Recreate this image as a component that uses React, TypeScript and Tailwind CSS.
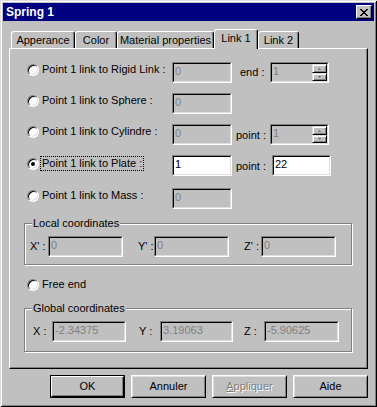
import React from 'react';

const font = "font-['Liberation_Sans',Arial,sans-serif]";

function Pixels({ rows, color }: { rows: string[]; color: string }) {
  return (
    <svg width={rows[0].length} height={rows.length} shapeRendering="crispEdges" className="block">
      {rows.flatMap((r, y) =>
        r.split('').map((c, x) =>
          c === 'X' ? <rect key={`${x}-${y}`} x={x} y={y} width={1} height={1} fill={color} /> : null
        )
      )}
    </svg>
  );
}

const closeGlyph = ['XX....XX', '.XX..XX.', '..XXXX..', '...XX...', '..XXXX..', '.XX..XX.', 'XX....XX'];

function Radio({ checked = false }: { checked?: boolean }) {
  return (
    <span className="relative block h-[12px] w-[12px] shrink-0 rounded-full border border-t-[#808080] border-l-[#808080] border-r-white border-b-white bg-white shadow-[inset_1px_1px_0_#000,inset_-1px_-1px_0_#dfdfdf]">
      {checked && <span className="absolute left-[3px] top-[3px] h-[4px] w-[4px] rounded-full bg-black" />}
    </span>
  );
}

function SpinBtn({ up = false }: { up?: boolean }) {
  return (
    <div
      className={`flex items-center justify-center border border-t-[#dfdfdf] border-l-[#dfdfdf] border-r-black border-b-black bg-[#c0c0c0] shadow-[inset_1px_1px_0_#fff,inset_-1px_-1px_0_#808080] ${
        up ? 'h-[9px]' : 'h-[8px]'
      }`}
    >
      <Pixels rows={up ? ['.X.', 'XXX'] : ['XXX', '.X.']} color="#808080" />
    </div>
  );
}

function Field({
  value = '',
  className = '',
  on = false,
  spin = false,
}: {
  value?: string;
  className?: string;
  on?: boolean;
  spin?: boolean;
}) {
  return (
    <div className={`h-[21px] shrink-0 border border-t-[#808080] border-l-[#808080] border-r-white border-b-white ${className}`}>
      <div
        className={`flex h-full border border-t-black border-l-black border-r-[#dfdfdf] border-b-[#dfdfdf] ${
          on ? 'bg-white text-black' : 'bg-[#c0c0c0] text-[#808080]'
        }`}
      >
        <span className="flex-1 pl-[1px] pt-[1px] leading-[13px]">{value}</span>
        {spin && (
          <div className="flex w-[15px] flex-col">
            <SpinBtn up />
            <SpinBtn />
          </div>
        )}
      </div>
    </div>
  );
}

function Choice({ label, checked = false, focus = false }: { label: string; checked?: boolean; focus?: boolean }) {
  return (
    <div className="mt-[1px] flex w-[145px] shrink-0 items-center gap-[3px]">
      <Radio checked={checked} />
      <span className={focus ? '-ml-[2px] border border-dotted border-black px-[1px] leading-[13px]' : 'leading-[13px]'}>
        {label}
      </span>
    </div>
  );
}

function Group({ title, className = '', children }: { title: string; className?: string; children: React.ReactNode }) {
  return (
    <div className={`relative ml-[14px] w-[328px] border border-[#808080] shadow-[inset_1px_1px_0_#fff,1px_1px_0_#fff] ${className}`}>
      <span className="absolute -top-[7px] left-[7px] bg-[#c0c0c0] px-[1px] leading-[13px]">{title}</span>
      {children}
    </div>
  );
}

function Tab({ label, active = false, className = '' }: { label: string; active?: boolean; className?: string }) {
  return (
    <div
      className={`flex shrink-0 justify-center rounded-t-[3px] border-t border-l border-r border-t-white border-l-white border-r-black bg-[#c0c0c0] pt-[2px] leading-[13px] shadow-[inset_-1px_0_0_#808080] ${
        active ? 'relative z-10 -mb-[1px] h-[20px]' : 'h-[17px]'
      } ${className}`}
    >
      {label}
    </div>
  );
}

function Button({ children, def = false, disabled = false }: { children: React.ReactNode; def?: boolean; disabled?: boolean }) {
  const inner = (
    <div
      className={`flex h-full w-full items-center justify-center border border-t-white border-l-white border-r-black border-b-black shadow-[inset_1px_1px_0_#dfdfdf,inset_-1px_-1px_0_#808080] ${
        disabled ? 'text-[#808080] [text-shadow:1px_1px_0_#fff]' : 'text-black'
      }`}
    >
      {children}
    </div>
  );
  return (
    <div className={`h-[23px] w-[75px] shrink-0 ${def ? 'border border-black' : ''}`}>
      {def ? (
        <div className="flex h-full w-full items-center justify-center border border-t-white border-l-white border-r-black border-b-black shadow-[inset_-1px_-1px_0_#808080]">
          {children}
        </div>
      ) : (
        inner
      )}
    </div>
  );
}

export default function App() {
  return (
    <div
      className={`flex h-[407px] w-[377px] flex-col bg-[#c0c0c0] p-[3px] text-[11px] text-black ${font} shadow-[inset_1px_1px_0_#dfdfdf,inset_-1px_-1px_0_#000,inset_2px_2px_0_#fff,inset_-2px_-2px_0_#808080]`}
    >
      {/* caption */}
      <div className="flex h-[18px] shrink-0 items-center justify-between bg-[#000080] pl-[3px] pr-[2px]">
        <span className="text-[12px] font-bold leading-[14px] text-white">Spring 1</span>
        <div className="flex h-[14px] w-[16px] items-center justify-center border border-t-white border-l-white border-r-black border-b-black bg-[#c0c0c0] shadow-[inset_-1px_-1px_0_#808080]">
          <Pixels rows={closeGlyph} color="#000" />
        </div>
      </div>

      {/* tabs */}
      <div className="flex h-[27px] shrink-0 items-end pl-[8px]">
        <Tab label="Apperance" className="w-[64px]" />
        <Tab label="Color" className="w-[42px]" />
        <Tab label="Material properties" className="w-[97px]" />
        <Tab label="Link 1" active className="w-[44px]" />
        <Tab label="Link 2" className="w-[41px]" />
      </div>

      {/* page */}
      <div className="mx-[6px] flex h-[321px] shrink-0 flex-col border border-t-white border-l-white border-r-black border-b-black shadow-[inset_-1px_-1px_0_#808080]">
        <div className="mt-[13px] flex h-[21px] items-start pl-[17px]">
          <Choice label="Point 1 link to Rigid Link :" />
          <Field value="0" className="w-[60px]" />
          <span className="ml-[8px] w-[30px] self-center">end :</span>
          <Field value="1" spin className="w-[59px]" />
        </div>
        <div className="mt-[10px] flex h-[21px] items-start pl-[17px]">
          <Choice label="Point 1 link to Sphere :" />
          <Field value="0" className="w-[60px]" />
        </div>
        <div className="mt-[10px] flex h-[21px] items-start pl-[17px]">
          <Choice label="Point 1 link to Cylindre :" />
          <Field value="0" className="w-[60px]" />
          <span className="ml-[4px] w-[34px] self-center pt-[2px]">point :</span>
          <Field value="1" spin className="w-[59px]" />
        </div>
        <div className="mt-[10px] flex h-[21px] items-start pl-[17px]">
          <Choice label="Point 1 link to Plate :" checked focus />
          <Field value="1" on className="w-[60px]" />
          <span className="ml-[4px] w-[36px] self-center pt-[2px]">point :</span>
          <Field value="22" on className="w-[59px]" />
        </div>
        <div className="mt-[12px] flex h-[21px] items-start pl-[17px]">
          <Choice label="Point 1 link to Mass :" />
          <Field value="0" className="w-[60px]" />
        </div>

        <Group title="Local coordinates" className="mt-[14px] h-[42px] pt-[12px]">
          <div className="flex items-center pl-[5px]">
            <span className="w-[18px]">X' :</span>
            <Field value="0" className="w-[75px]" />
            <span className="ml-[15px] w-[16px]">Y' :</span>
            <Field value="0" className="w-[75px]" />
            <span className="ml-[15px] w-[17px]">Z' :</span>
            <Field value="0" className="w-[75px]" />
          </div>
        </Group>

        <div className="mt-[13px] flex h-[13px] items-center gap-[3px] pl-[17px]">
          <Radio />
          <span className="leading-[13px]">Free end</span>
        </div>

        <Group title="Global coordinates" className="mt-[17px] h-[44px] pt-[12px]">
          <div className="flex items-center pl-[8px]">
            <span className="w-[19px]">X :</span>
            <Field value="-2.34375" className="w-[74px]" />
            <span className="ml-[13px] w-[21px]">Y :</span>
            <Field value="3.19063" className="w-[73px]" />
            <span className="ml-[11px] w-[20px]">Z :</span>
            <Field value="-5.90625" className="w-[75px]" />
          </div>
        </Group>
      </div>

      {/* buttons */}
      <div className="mt-[6px] flex justify-end gap-[6px] pr-[6px]">
        <Button def>OK</Button>
        <Button>Annuler</Button>
        <Button disabled>
          <span>
            <span className="underline">A</span>ppliquer
          </span>
        </Button>
        <Button>Aide</Button>
      </div>
    </div>
  );
}
